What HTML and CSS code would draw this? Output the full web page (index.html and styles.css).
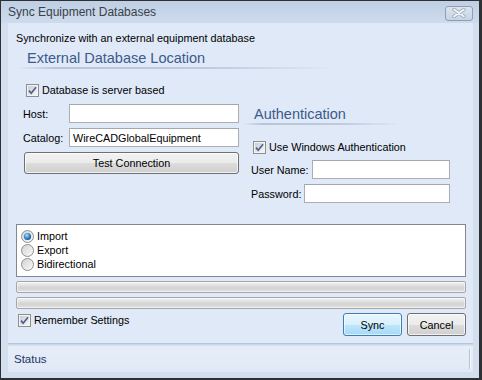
FILE: index.html
```html
<!DOCTYPE html>
<html lang="en">
<head>
  <meta charset="UTF-8">
  <title>Sync Equipment Databases</title>
  <link rel="stylesheet" href="styles.css">
</head>
<body>
  <svg class="defs" width="0" height="0">
    <defs>
      <linearGradient id="box-fill" x1="0" y1="0" x2="1" y2="1">
        <stop offset="0" stop-color="#c9ccd1"/>
        <stop offset="1" stop-color="#f7f7f7"/>
      </linearGradient>
      <linearGradient id="radio-fill" x1="0" y1="0" x2="1" y2="1">
        <stop offset="0" stop-color="#d2d2d2"/>
        <stop offset="1" stop-color="#fbfbfb"/>
      </linearGradient>
      <radialGradient id="radio-dot" cx="0.4" cy="0.35" r="0.7">
        <stop offset="0" stop-color="#b9e4fb"/>
        <stop offset="0.5" stop-color="#3c8fd2"/>
        <stop offset="1" stop-color="#1a4f8e"/>
      </radialGradient>
      <symbol id="checkbox" viewBox="0 0 13 13">
        <rect x="0.5" y="0.5" width="12" height="12" fill="#f4f4f4" stroke="#8e8f8f"/>
        <rect x="2" y="2" width="9" height="9" fill="url(#box-fill)"/>
        <path d="M3 6.6 L5.2 9.2 L10 3.3" fill="none" stroke="#4d5f93" stroke-width="1.7"/>
      </symbol>
      <symbol id="radio-on" viewBox="0 0 13 13">
        <circle cx="6.5" cy="6.5" r="6" fill="url(#radio-fill)" stroke="#8e8f8f"/>
        <circle cx="6.5" cy="6.5" r="3.6" fill="url(#radio-dot)"/>
      </symbol>
      <symbol id="radio-off" viewBox="0 0 13 13">
        <circle cx="6.5" cy="6.5" r="6" fill="url(#radio-fill)" stroke="#8e8f8f"/>
      </symbol>
    </defs>
  </svg>

  <div class="window">
    <div class="titlebar">
      <span class="title">Sync Equipment Databases</span>
      <span class="close-btn">
        <svg width="16" height="10" viewBox="0 0 16 10">
          <path d="M3 1.5 L13 8.5 M13 1.5 L3 8.5" stroke="#a3adba" stroke-width="3.4" stroke-linecap="round"/>
          <path d="M3 1.5 L13 8.5 M13 1.5 L3 8.5" stroke="#f4f7fb" stroke-width="1.6" stroke-linecap="round"/>
        </svg>
      </span>
    </div>

    <div class="client">
      <div class="content">
        <p class="intro">Synchronize with an external equipment database</p>
        <h2 class="section-title main-title">External Database Location</h2>

        <div class="columns">
          <div class="col-left">
            <label class="check"><svg width="13" height="13"><use href="#checkbox"/></svg>Database is server based</label>
            <div class="field field-fixed">
              <span>Host:</span>
              <input class="text" type="text">
            </div>
            <div class="field field-fixed">
              <span>Catalog:</span>
              <input class="text" type="text" value="WireCADGlobalEquipment">
            </div>
            <button class="btn btn-wide">Test Connection</button>
          </div>

          <div class="col-right">
            <h2 class="section-title auth-title">Authentication</h2>
            <label class="check"><svg width="13" height="13"><use href="#checkbox"/></svg>Use Windows Authentication</label>
            <div class="field field-free">
              <span>User Name:</span>
              <input class="text" type="text">
            </div>
            <div class="field field-free">
              <span>Password:</span>
              <input class="text" type="password">
            </div>
          </div>
        </div>

        <div class="direction-box">
          <div class="radio"><svg width="13" height="13"><use href="#radio-on"/></svg>Import</div>
          <div class="radio"><svg width="13" height="13"><use href="#radio-off"/></svg>Export</div>
          <div class="radio"><svg width="13" height="13"><use href="#radio-off"/></svg>Bidirectional</div>
        </div>

        <div class="progress"></div>
        <div class="progress"></div>

        <div class="actions">
          <label class="check remember"><svg width="13" height="13"><use href="#checkbox"/></svg>Remember Settings</label>
          <div class="action-buttons">
            <button class="btn btn-default">Sync</button>
            <button class="btn">Cancel</button>
          </div>
        </div>
      </div>

      <div class="statusbar">
        <span class="status-text">Status</span>
        <span class="status-sep"></span>
      </div>
    </div>
  </div>
</body>
</html>
```

FILE: styles.css
```css
body {
  margin: 0;
  font-family: "Liberation Sans", Arial, sans-serif;
  font-size: 10.8px;
  color: #000;
  background: #fff;
}

.defs {
  position: absolute;
  width: 0;
  height: 0;
}

.window {
  width: 482px;
  height: 380px;
  box-sizing: border-box;
  border-style: solid;
  border-color: #2f3033;
  border-width: 1px 3px 2px 1px;
  background: #d3dfee;
  padding: 0 6px 6px 7px;
  display: flex;
  flex-direction: column;
}

.titlebar {
  height: 22px;
  margin: 0 -6px 0 -7px;
  padding: 0 6px 0 7px;
  background: linear-gradient(#bfcfe4, #cddbed);
  display: flex;
  align-items: center;
  justify-content: space-between;
}

.title {
  font-size: 12px;
  color: #3b3f47;
}

.close-btn {
  width: 26px;
  height: 13px;
  border: 1px solid #8f9db1;
  border-radius: 3px;
  background: linear-gradient(#dbe4ef, #c7d4e4);
  display: flex;
  align-items: center;
  justify-content: center;
  margin-top: 2px;
}

.client {
  flex: 1;
  display: flex;
  flex-direction: column;
  background: #dfe9f7;
}

.content {
  flex: 1;
  padding: 8px 7px 0 8px;
}

.intro {
  margin: 0;
  line-height: 14px;
}

.section-title {
  margin: 0;
  font-weight: normal;
  font-size: 14.5px;
  line-height: 18px;
  color: #3d5a8b;
  padding-bottom: 2px;
  background: linear-gradient(to right, rgba(181, 196, 216, 0), #b6c5d9 12%, #bccadc 60%, rgba(190, 204, 222, 0)) no-repeat left bottom / 100% 2px;
}

.main-title {
  margin: 4px 0 0 2px;
  width: 304px;
  padding-left: 9px;
}

.columns {
  display: flex;
  gap: 12px;
  padding-left: 7px;
}

.col-left {
  width: 216px;
  padding-top: 14px;
}

.col-right {
  width: 199px;
  padding-top: 36px;
}

.auth-title {
  margin-left: -8px;
  padding-left: 11px;
  width: 146px;
}

.check {
  display: flex;
  align-items: center;
  gap: 3px;
  line-height: 14px;
  margin-left: 3px;
}

.col-right .check {
  margin-top: 15px;
  margin-left: 2px;
}

.field {
  display: flex;
  align-items: center;
  margin-top: 5px;
}

.check + .field {
  margin-top: 7px;
}

.col-right .check + .field {
  margin-top: 6px;
}

.field-fixed span {
  width: 46px;
  flex: none;
}

.field-free {
  gap: 3px;
}

.field-free span {
  flex: none;
}

.text {
  flex: 1;
  min-width: 0;
  height: 19px;
  box-sizing: border-box;
  border: 1px solid #abadb3;
  border-top-color: #a3a6ad;
  background: #fff;
  padding: 0 3px;
  font-family: inherit;
  font-size: 10.8px;
  color: #000;
  outline: none;
}

.btn {
  font-family: inherit;
  font-size: 10.8px;
  color: #000;
  height: 23px;
  width: 59px;
  padding: 0;
  border: 1px solid #707070;
  border-radius: 3px;
  background: linear-gradient(#f2f2f2 0%, #ebebeb 50%, #dddddd 51%, #cfcfcf 100%);
  box-shadow: inset 0 0 0 1px rgba(255, 255, 255, 0.7);
}

.btn-wide {
  display: block;
  width: 215px;
  height: 22px;
  margin: 5px 0 0 1px;
}

.btn-default {
  border-color: #3c7fb1;
  background: linear-gradient(#eaf6fd 0%, #d9f0fc 50%, #bee6fd 51%, #a7d9f5 100%);
  box-shadow: inset 0 0 0 1px rgba(255, 255, 255, 0.6);
}

.direction-box {
  margin-top: 21px;
  border: 1px solid #828790;
  background: #fff;
  padding: 4px 4px 5px;
}

.radio {
  display: flex;
  align-items: center;
  gap: 3px;
  line-height: 14px;
  height: 14px;
}

.progress {
  margin-top: 4px;
  height: 12px;
  box-sizing: border-box;
  border: 1px solid #a7a7a7;
  border-radius: 2px;
  background: linear-gradient(#f4f4f4, #dddddd 40%, #d2d2d2 60%, #e2e2e2);
  box-shadow: inset 0 0 0 1px rgba(255, 255, 255, 0.5);
}

.actions {
  margin-top: 4px;
  display: flex;
  justify-content: space-between;
  align-items: flex-start;
}

.remember {
  margin-left: 2px;
  margin-top: 0;
}

.action-buttons {
  display: flex;
  gap: 5px;
}

.statusbar {
  height: 29px;
  box-sizing: border-box;
  border-top: 1px solid #b4c6dc;
  box-shadow: inset 0 1px 0 #c9d7e8, inset 0 2px 0 #d7e2f0;
  background: linear-gradient(#e7eef8, #e0e9f5);
  display: flex;
  align-items: center;
  justify-content: space-between;
  padding: 1px 3px 0 6px;
}

.status-text {
  font-size: 11.5px;
  color: #1d3566;
}

.status-sep {
  width: 1px;
  height: 20px;
  background: #b7c3d3;
  box-shadow: 1px 0 0 #f4f8fc;
}
```
